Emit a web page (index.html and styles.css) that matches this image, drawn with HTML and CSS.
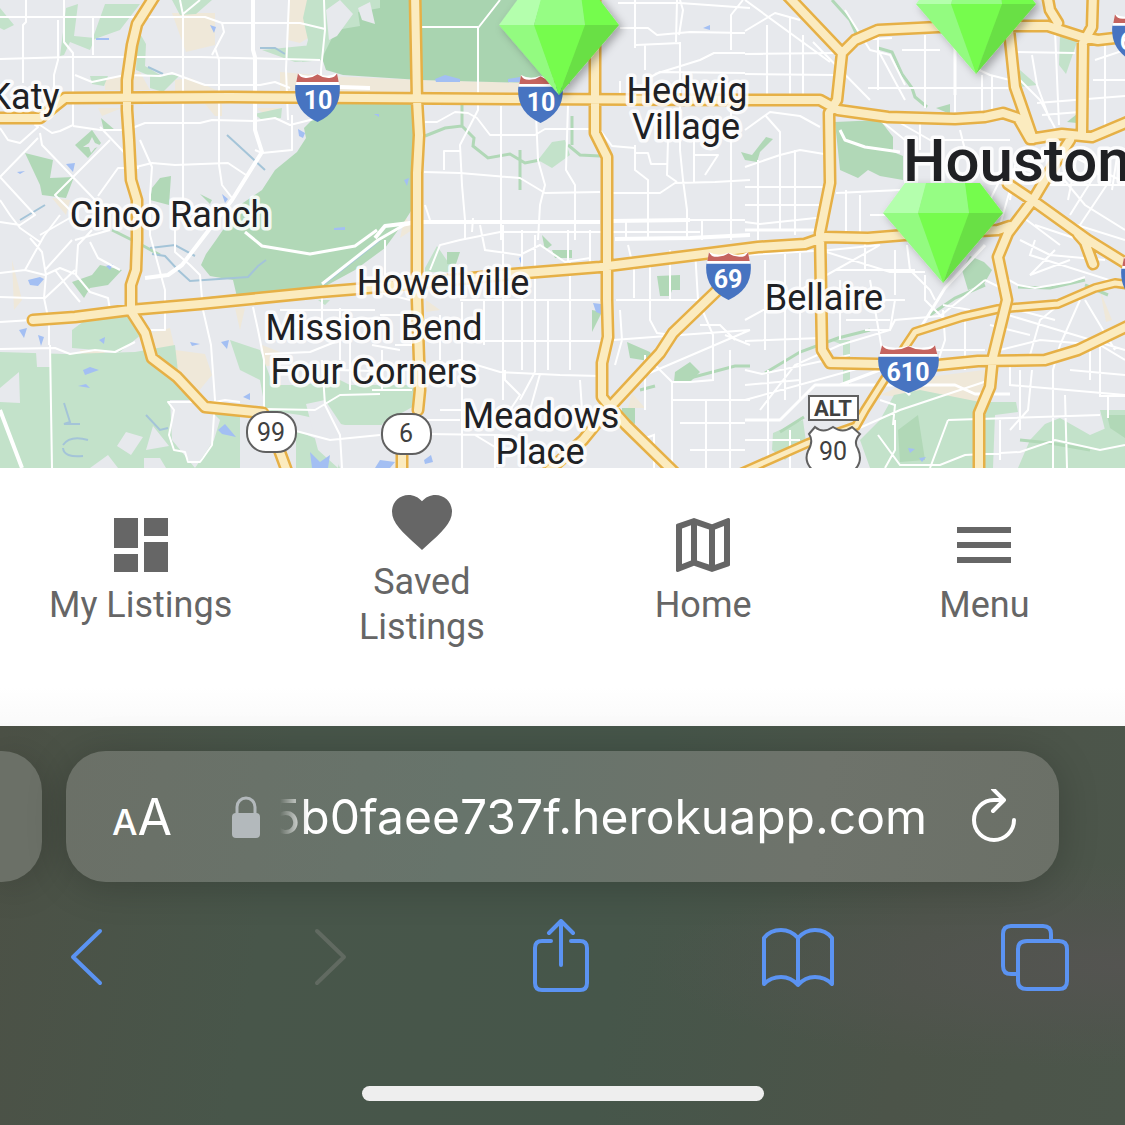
FILE: index.html
```html
<!DOCTYPE html>
<html lang="en">
<head>
<meta charset="utf-8">
<meta name="viewport" content="width=device-width, initial-scale=1">
<title>Listings map</title>
<link rel="stylesheet" href="styles.css">
</head>
<body>
<main class="map">
<svg class="map-canvas" viewBox="0 0 1125 468" role="img" aria-label="Map of Houston">
<defs>
  <symbol id="interstate" viewBox="0 0 136 146" preserveAspectRatio="none">
    <path d="M2 40 9 0Q36 15 68 2Q100 15 127 0L134 40Z" fill="#fff"/>
    <path d="M4 27 9 1Q17 18 40 14Q56 13 68 4Q80 13 96 14Q119 18 127 1L132 27Z" fill="#c5645f"/>
    <path d="M1 36H135Q142 112 68 146Q-6 112 1 36Z" fill="#4774c1"/>
  </symbol>
  <symbol id="gem" viewBox="0 0 120 100">
    <path d="M22 0H44L35 30H0Z" fill="#b4ffad"/>
    <path d="M43 0H83L86 30H35Z" fill="#96fd84"/>
    <path d="M82 0H97L120 30H86Z" fill="#74fc4d"/>
    <path d="M0 30H36L60 100Z" fill="#93fb80"/>
    <path d="M35 30H87L60 100Z" fill="#76fc4e"/>
    <path d="M86 30H120L60 100Z" fill="#69e044"/>
  </symbol>
  <filter id="shade" x="-20%" y="-20%" width="150%" height="150%">
    <feDropShadow dx="4" dy="3" stdDeviation="4" flood-color="#000" flood-opacity=".3"/>
  </filter>
</defs>
<rect width="1125" height="468" fill="#e7e9ed"/>

<!-- built-up and commercial land -->
<g fill="#efe8d9">
  <path d="M172 13H215V45L186 52ZM290 0H310L304 15 308 38 300 43 288 40ZM105 80 140 72 150 90H105ZM175 80 190 78 220 92H175ZM258 108H282L278 112 268 115 258 110ZM98 108H122L102 116ZM205 104H222V116H215ZM280 72 330 76 420 80 560 84V96H280ZM52 198 70 200 66 215Z"/>
  <path d="M150 333 170 328 175 350 205 354 212 375 198 392 172 380ZM80 350 105 350 104 356H82ZM235 308H245L240 330ZM12 260 22 300 14 310ZM262 345 280 352V366H264ZM405 215 412 230 400 238ZM880 395 920 378 1000 368 985 402 930 400ZM1100 290 1112 320 1106 322ZM632 393 645 408 628 408ZM426 300 440 310 426 312Z"/>
</g>

<!-- light parks -->
<g fill="#c3e2ca">
  <path d="M307 0H380V40L322 60 302 62 308 40 303 18ZM66 8 78 4 74 36 95 38 90 50 70 42 64 55 60 56ZM105 4H140L120 30 92 40 95 32ZM172 0H212L196 14 180 15ZM138 30 146 44 145 66 160 75H180L163 92 150 88 150 76 136 70ZM262 50 322 44V60L295 62ZM254 114 282 108 281 118 262 120ZM90 76H108L104 86 92 84ZM0 8 14 25 4 30 0 28Z"/>
  <path d="M0 352 65 354 135 352 175 345 180 390 202 408 240 415 240 468H0ZM72 330 88 318 136 310 142 334 120 352 72 348ZM230 340 260 350 275 390 310 395 318 408H265L260 380 240 370ZM300 385 340 380 360 390 370 420H345L310 412ZM265 385H415L425 400 380 425H345L300 415 265 410ZM296 430 330 445 340 468H296ZM210 296H245L240 305 212 305ZM268 330H300V340H272ZM318 300H330L325 305ZM368 396 383 395 382 425H368Z"/>
  <path d="M894 395 920 390 980 402H1016L1018 412 995 415 993 468H870L860 440 880 420ZM1060 418 1090 435 1125 420V468H1018L1030 440 1045 424ZM1100 410H1125V430H1105ZM552 142 565 140 570 155 552 168 538 160ZM1060 35 1077 42 1066 74 1059 65ZM1020 70 1037 85 1020 87ZM425 268 437 246 448 262 459 270 455 272H425ZM830 340 850 340 850 384H843V345ZM773 433 803 420 806 442 785 460 772 450Z"/>
</g>

<!-- woodland and reservoirs -->
<g fill="#b1d8b7">
  <path d="M328 104H412L418 200 404 222 385 248 355 270 322 288 237 297 233 280 210 276 201 265 206 254 216 240 240 205 262 190 275 170 297 152 306 138 304 128Z"/>
  <path d="M835 122 880 120 893 137 893 152 903 156V180L880 176 868 170 858 178 840 170ZM741 152 752 155 766 137 773 139 760 152 757 162 745 160ZM962 270 970 256 984 262 992 270 984 284 968 290ZM657 276 680 275 680 290H672L670 296H660ZM627 342 650 352 655 362 630 358ZM675 372 690 362 700 372 690 382 674 382ZM92 130 101 143 88 158 75 145ZM25 153 53 160 50 178 74 177 66 198 42 195 40 185ZM152 188 160 178 171 176 169 205 150 200ZM72 282 92 275 100 265 122 270 108 285 90 288 84 298Z"/>
  <path d="M898 430 918 415 920 428 925 460 900 462ZM1107 415H1125V438L1110 428ZM622 408H635V424L622 420ZM542 235 552 245 545 250ZM552 250H572V258H555ZM447 252H460L456 264H447ZM101 118 115 130 104 131ZM592 310 602 312 592 332ZM200 194 212 200 210 204ZM936 108 950 104V114ZM1067 122 1077 114V123Z"/>
</g>
<path d="M336 30 360 26 358 12 380 8 380 0H570V84L420 80 343 75 326 70 322 58Z" fill="#a9d4b0"/>
<path d="M326 10 340 0 353 14 337 36 329 40ZM358 8 370 2 375 24 362 20Z" fill="#e7e9ed"/>
<g fill="#e7e9ed">
  <path d="M92 137 95 143 102 146 95 148 91 153 89 147 83 147 89 143ZM0 388 19 372 20 403 0 402ZM36 352H50V367H37ZM117 446 126 432 143 437 131 455ZM146 450 153 426 169 446ZM90 468 108 455 118 468ZM144 458H160L166 468H144ZM170 400H200L220 420 214 440 195 468 172 440ZM306 404 325 400 345 430 338 468 318 450ZM200 285 220 280 230 292 205 298Z"/>
</g>

<!-- streams and ponds -->
<g fill="none" stroke="#b1d8b7" stroke-width="3">
  <path d="M425 136 445 128 462 126 462 105M462 126 474 138 473 146 488 158 510 154 525 163 540 160M568 145 580 155 600 156M520 150V190M572 116V145"/>
  <path d="M832 0 850 20 857 35M878 48 892 52 902 74 912 88 915 97 927 107M870 330 838 338 800 352 765 373M930 315 955 298 985 285M1018 287 1050 288 1085 280M112 230 140 244 160 255M1085 285 1108 295"/>
  <path d="M690 378 735 366 750 366M1020 440 1050 443 1090 450M780 432 804 417M640 390 655 386"/>
</g>
<g fill="none" stroke="#a4c4d8" stroke-width="2">
  <path d="M152 254 165 256 178 270 190 281 248 277 258 266 266 260M150 248 175 245 195 256M324 284 380 240M227 135 265 170M260 48 275 48 285 54M148 67 163 74M64 403 70 422 64 424H80M63 445Q70 435 88 440M63 448Q64 458 83 456M20 220 45 205M146 415 160 430 168 428"/>
</g>
<g fill="#a3bff3">
  <path d="M28 280 40 277 44 279 38 286 30 285ZM19 330 27 328 24 338ZM38 335 44 337 41 346ZM83 370 90 367 99 370 85 375ZM78 386 86 384 90 388ZM66 164 75 163 73 172ZM17 172 25 171 20 174ZM298 129 305 133 303 138 299 136ZM210 25 216 27 214 33ZM222 194 228 199 225 203ZM96 38H109V40H96ZM435 79 445 75 460 79V82H436ZM508 79 520 77V82H508ZM190 342 200 344 192 346ZM221 342 229 340 227 349ZM218 430 225 424 236 437 222 434ZM243 397 250 393V400ZM106 266 113 264 110 270ZM99 340 105 337 104 344ZM334 228 345 227V230H334ZM593 303 601 304V314L596 312ZM519 258 523 256 522 267ZM374 114H379V117ZM404 180 409 178 407 186ZM310 452 320 462 330 455 328 468H312ZM375 468 380 460 395 462 390 468ZM424 460 431 455 433 462 425 464ZM908 448 915 449 910 453ZM919 458 926 457 922 462ZM703 28 710 25V30Z"/>
</g>

<!-- local streets -->
<g fill="none" stroke="#fff" stroke-width="2" stroke-linejoin="round">
  <path d="M0 17H205L222 23H300L325 29M0 59 70 57H200L320 60M26 0V22L23 25V83M64 0V42L73 53V125L60 131 52 133 40 125H35L38 127 20 143 8 140 0 128M58 20V60L54 75V92M93 18V55M180 0 183 15V200M183 14 200 0M222 23 224 32 212 55M215 48 219 60V165L222 185 232 198M289 0 286 70 288 120M324 0 325 30 321 70V78M75 75 92 82 125 75 160 76 172 73 205 85 260 85 275 82 290 88"/>
  <path d="M127 130 145 123H200L212 120 255 121 275 118 290 125 318 118M255 150 262 153 292 150V115M132 168 152 163 175 165 228 163 246 175M40 133 42 145 95 200M100 127 120 148 138 168 118 168 98 196M125 130H100L73 126M38 138 0 177 35 215 20 225 0 222M110 140 55 195 75 215 40 235M0 200 10 215 20 228 40 242M140 140 152 167 150 195 150 235 165 290V330H145"/>
  <path d="M0 273 25 270 45 275 60 268 75 274M60 215 44 236 25 270M30 238 42 252 46 275 44 298 49 322V345M72 240 45 270M92 230 78 245 76 275 90 292 108 298 110 310M75 240 110 230M90 242 98 258 120 270M55 270 70 290 80 302M0 297 30 298H45L75 270M0 322 32 320M0 349 55 348 70 354 95 350 115 352 135 342M50 345 52 468M175 230V252L190 265 200 275 203 310 211 345 215 400 212 445 203 458 200 462H188L185 452 174 450 169 435 174 410 168 402H215L225 400 240 402"/>
  <path d="M253 307 258 330 264 360V410M265 354 310 352 335 342M265 409 315 410 340 395 380 394M322 360 325 405 340 435 342 468M296 431 330 440 380 435M322 288V340M280 310H375M285 330 330 320 380 318M350 330V390M335 370 375 371M340 308V360"/>
  <path d="M420 27H478M478 94V28L500 0M478 94V110L460 145 462 185 465 220V240M425 122H437L455 112 468 113 477 118 490 135H535L545 129H600M501 106V240M536 115 538 160 545 185 540 205 538 240M568 105 566 170 575 185V240M424 172 460 173 520 178 545 193 600 192M444 170V151H460M472 232 473 218M425 205 430 220"/>
  <path d="M618 3 680 3 750 8M635 0V48M620 28H648L657 35 690 32 745 33M677 0 676 42M680 0 683 10 679 35M731 50V15L743 0M636 45 680 43M645 45V70M620 81V95M655 74 700 60 714 53H745M600 130 612 146 635 148M680 42V150L683 180 687 210V240M635 145V170L648 180V240M635 148V153H648L651 164H668M668 140 667 175 677 182M610 193H660L675 183 715 182 750 180M694 140V182M695 155H718L705 175M731 110V240M626 240V220M702 220V240M610 220H745M645 80 660 72 745 73"/>
  <path d="M745 31 775 13 800 20M745 0 830 62M745 54 838 53M745 74 835 75M767 25V94M790 18V94M803 35V98M813 42 870 100M878 30V90M925 35V108M955 86V112M902 50 940 50M868 88H1010M975 68 990 75 1010 80M982 75V112M992 75V112M878 50 905 100M845 10 870 50 890 55 905 85M855 40 892 38M1015 52 1075 53M1055 30 1059 125M1020 80 1040 100 1055 128M1032 55 1037 85 1050 120M1037 103 1125 96M1095 60 1125 50M1093 80H1125M1105 45V125M1042 115 1080 112M745 130 770 112 800 116 820 127M765 115 780 132V230M745 167 780 155 800 150 830 155M745 187H830M745 205H825M795 150V235M758 160V240M745 222 760 224 825 217M836 193 900 190M860 195V235M870 215H895M846 190V233M895 120 930 140H1010M920 120V150M960 130 965 150M880 120 905 140"/>
</g>
<g fill="none" stroke="#fff" stroke-width="2">
  <path d="M430 270 440 245 460 240 500 232H700M480 225 485 250 520 255 540 245 565 262 590 258M503 225V400M522 230V300M460 300H600M462 302V468M460 341H600L680 335 750 330M484 345V300M425 320 470 325M425 370 460 360 500 372 560 375 600 376M505 370V380L520 395 510 410M535 372 520 400M540 374 530 410M522 300V370M548 300V370M570 262V370M580 380 582 410M568 230V262M590 230V262M535 235V372M628 245 634 270V298M650 258V320L657 333 672 335M670 250V300M695 250 698 300 713 335V380L690 382 672 382 655 365 645 358M616 300H702M620 310 622 340 615 365M645 355V410M645 375 750 330M725 335 750 345M672 382V468M672 400H750M680 423H745M706 400V468M730 350V468M640 440 654 435V468M690 450H745M700 325 720 325 735 340M370 290 410 300M385 240V275M440 410H465M425 420H460M425 434 500 435 520 440M475 435 500 450 560 460M495 435V468M380 315H412M395 345H412V330M372 345 400 350M382 350V390M372 390H412M440 315V360"/>
  <path d="M745 255 830 250 880 245M765 260V350M785 245V400M800 245V400M745 341 820 338M745 385 800 380M745 400 835 375 860 368M820 250 890 272H925M870 280 882 350M840 280V340M895 300 890 330 865 330M760 410 795 365 840 345 890 330 895 320 940 316 985 280M745 370 762 374 790 368 850 355M745 320 800 290 880 245M835 270H915M865 240V270M895 250V295M907 245 910 270 930 290 935 300M925 275 925 300 950 325M846 300H905M846 320H890M943 310 945 340 935 370M965 320V370M935 350H985M943 305 970 310M1000 275 1018 285 1035 288 1070 282 1085 277M985 280 1005 290M1008 315 1125 350M1018 310 1055 320M1020 240 1050 255 1105 260M1035 240 1030 255 1125 285M1055 250 1030 275 1070 260M1080 300 1060 345 1053 370V468M1065 300 1040 320 1030 355M1085 300 1115 350M1000 350 1040 340 1100 345 1125 360M1020 370V430M1010 360 1010 385 1125 395M1065 395 1067 468M1100 340V396H1125M1090 345V380M1108 395V418M948 420 1100 415M895 420V450L885 468M878 435 900 465H940L965 455 1020 452 1055 440 1100 450 1125 445M948 420 930 468M855 430 900 410 990 380M880 400 895 405 893 425M745 440H800M790 430V468M768 370V460M1000 460V420M905 340 903 380M1032 370 1028 410 1010 430M990 325 1030 335M1070 370 1125 375"/>
  <path d="M1000 180 985 210M1010 190 1000 225M1015 165 1010 200M1060 175 1085 205 1125 230M1075 165 1068 200M1095 175 1070 215M1110 180 1080 225M1050 185 1125 185M1045 215 1125 240M1035 225 1110 250M1020 215 1060 245M1060 150 1120 180M1100 155 1098 175M1118 150 1112 190"/>
</g>
<g fill="none" stroke="#fff" stroke-width="4" stroke-linejoin="round">
  <path d="M253 0V50L255 57V130L262 152 232 200 205 235 182 265 168 275 145 278M370 88 340 87M0 410 22 468M375 238 385 226 418 222H600M610 221 690 220M615 239 690 238 750 235"/>
  <path d="M245 232 262 246 310 254 355 246 377 230M322 284 378 240 404 225 418 222M840 130 845 140 865 147 900 152M745 420H780L815 385H900L910 395M900 385H955L975 394H1010M910 345 945 288 985 245M885 368 840 385M944 238 975 225M955 30V95M745 230H820" stroke-width="3"/>
</g>

<!-- freeways: casing, then fill -->
<g fill="none" stroke-linejoin="round" stroke-linecap="round">
  <g stroke="#e6b046" stroke-width="10">
    <path id="alt90" d="M738 474 808 443 856 426 865 410 905 347 915 332 962 317 998 309 1058 304 1095 288 1115 283 1130 285"/>
  </g>
  <use href="#alt90" stroke="#fbebbf" stroke-width="5"/>
  <g stroke="#e6b046" stroke-width="13">
    <path id="freeways" d="M156-6 137 24 132 45 127 80V110L129 140 131 180 137 200V240L136 270 131 285V311L145 333 152 358 177 377 205 407 263 413M274 436 288 474M-6 118H40L65 98 230 97 520 99 745 100H820L838 110 888 117 955 119 985 117 1003 113 1018 118 1030 139 1062 134 1092 137 1130 121M786-6 842 53 837 100 829 113 830 183 820 233 822 350 830 363 878 364 938 365 978 361 1045 360 1078 350 1130 325M842 53 855 40 878 30 938 27 1018 26 1048 26 1082 37 1098 40 1115 38M1093-6 1092 27 1083 43 1082 133M1047-6 1050 10 1058 23M1009 30 1015 87 1023 110 1033 139M1070 140 1055 163 1033 200 1008 233 998 257 1007 300 993 357 990 387 979 413V474M1008 184 1035 202 1088 240 1130 266M1078 234 1085 242 1093 264M33 320 75 317 130 310 200 304 320 292 357 289 513 274 600 267 703 254 758 247 805 244 825 237 868 238 905 235 998 230 1010 226M415-6 417 100 419 135 417 173V300L420 390 418 410M402 450V474M595-6V133L607 157V300L608 337 602 363V397L610 407 626 425 676 474M728 280 673 333 660 353 610 407 583 440 545 474"/>
  </g>
  <use href="#freeways" stroke="#fbebbf" stroke-width="8"/>
</g>

<!-- route shields -->
<use href="#interstate" x="295" y="73" width="45" height="49"/>
<use href="#interstate" x="518" y="75" width="45" height="48"/>
<use href="#interstate" x="706" y="252" width="45" height="48"/>
<use href="#interstate" x="878" y="345" width="61" height="48"/>
<use href="#interstate" x="1112" y="14" width="45" height="48"/>
<use href="#interstate" x="1121" y="257" width="45" height="48"/>
<g class="shield-text shield-light">
  <text x="318" y="109">10</text><text x="541" y="111">10</text>
  <text x="728" y="288">69</text><text x="908" y="381">610</text><text x="1134" y="50">69</text>
</g>
<g fill="#fff" stroke="#606060" stroke-width="2">
  <rect x="247" y="412" width="49" height="40" rx="19"/>
  <rect x="382" y="414" width="49" height="40" rx="19"/>
  <path d="M809 396H858V420H809Z"/>
  <path d="M809 434 815 427Q823 434 833 427Q843 434 852 427L860 434Q853 442 858 449Q864 463 852 472H815Q803 463 808 451Q814 441 809 434Z"/>
</g>
<g class="shield-text">
  <text x="271" y="441">99</text><text x="406" y="442">6</text><text x="833" y="460">90</text>
  <text class="shield-alt" x="833" y="416">ALT</text>
</g>

<!-- place names -->
<g class="place">
  <text x="24" y="109">Katy</text><text x="170" y="227">Cinco Ranch</text>
  <text x="687" y="103">Hedwig</text><text x="686" y="139">Village</text>
  <text x="443" y="295">Howellville</text><text x="374" y="340">Mission Bend</text>
  <text x="374" y="384">Four Corners</text><text x="541" y="428">Meadows</text>
  <text x="540" y="464">Place</text><text x="824" y="310">Bellaire</text>
</g>
<text class="city" x="903" y="181">Houston</text>

<!-- listing pins -->
<g filter="url(#shade)">
  <use href="#gem" x="499" y="-5" width="120" height="100"/>
  <use href="#gem" x="916" y="-26" width="120" height="100"/>
  <use href="#gem" x="883" y="183" width="120" height="100"/>
</g>
</svg>
</main>

<nav class="tabs" aria-label="Main">
  <a class="tab" href="#listings"><svg class="tab-icon" viewBox="0 0 24 24" aria-hidden="true"><path d="M3 13h8V3H3v10zm0 8h8v-6H3v6zm10 0h8V11h-8v10zm0-18v6h8V3h-8z"/></svg><span>My Listings</span></a>
  <a class="tab" href="#saved"><svg class="tab-icon" viewBox="0 0 24 24" aria-hidden="true"><path d="m12 21.350-1.450-1.320C5.400 15.360 2 12.280 2 8.500 2 5.420 4.420 3 7.500 3c1.740 0 3.410.81 4.500 2.090C13.090 3.810 14.760 3 16.500 3 19.580 3 22 5.420 22 8.500c0 3.780-3.400 6.860-8.550 11.540L12 21.350z"/></svg><span>Saved Listings</span></a>
  <a class="tab" href="#home"><svg class="tab-icon" viewBox="0 0 24 24" aria-hidden="true"><path d="m20.500 3-.16.03L15 5.100 9 3 3.360 4.900c-.21.07-.36.25-.36.48V20.500c0 .28.22.5.5.5l.16-.03L9 18.900l6 2.100 5.640-1.900c.21-.07.36-.25.36-.48V3.500c0-.28-.22-.5-.5-.5zM10 5.470l4 1.400v11.660l-4-1.400V5.470zm-5 .99 3-1.010v11.700l-3 1.160V6.460zm14 11.080-3 1.010V6.860l3-1.160v11.840z"/></svg><span>Home</span></a>
  <a class="tab" href="#menu"><svg class="tab-icon" viewBox="0 0 24 24" aria-hidden="true"><path d="M3 18h18v-2H3v2zm0-5h18v-2H3v2zm0-7v2h18V6H3z"/></svg><span>Menu</span></a>
</nav>

<footer class="browser">
  <div class="address-row">
    <div class="next-tab"></div>
    <div class="address">
      <button class="text-size" type="button" aria-label="Page settings"><span class="small-a">A</span>A</button>
      <button class="url" type="button">
        <svg class="lock" viewBox="0 0 28 42" aria-hidden="true"><rect y="17" width="28" height="25" rx="4" fill="#b3b9bc"/><path d="M5 19V11a9 9 0 0 1 18 0v8" fill="none" stroke="#b3b9bc" stroke-width="3"/></svg>
        <span class="host">5b0faee737f.herokuapp.com</span>
      </button>
      <button class="reload" type="button" aria-label="Reload"><svg viewBox="0 0 46 56" width="46" height="56" aria-hidden="true"><path d="M43 31A20 20 0 1 1 23 11h10M22 0l11 11-11 11" fill="none" stroke="#fff" stroke-width="4" stroke-linecap="round" stroke-linejoin="round"/></svg></button>
    </div>
  </div>
  <div class="toolbar">
    <button type="button" aria-label="Back"><svg viewBox="0 0 34 74" width="34" height="74"><path d="M31 12 4 38 31 64"/></svg></button>
    <button class="forward" type="button" aria-label="Forward" disabled><svg viewBox="0 0 34 74" width="34" height="74"><path d="M3 12 30 38 3 64"/></svg></button>
    <button type="button" aria-label="Share"><svg viewBox="0 0 58 74" width="58" height="74"><path d="M19 22H10Q3 22 3 29V64Q3 71 10 71H48Q55 71 55 64V29Q55 22 48 22H39M29 46V3M17 14 29 2 41 14"/></svg></button>
    <button type="button" aria-label="Bookmarks"><svg viewBox="0 0 72 74" width="72" height="74"><path d="M36 66V19Q29 11 19 11Q8 11 2 19V65Q9 58 19 58Q29 58 36 66Q43 58 53 58Q63 58 70 65V19Q64 11 53 11Q43 11 36 19"/></svg></button>
    <button type="button" aria-label="Tabs"><svg viewBox="0 0 68 74" width="68" height="74"><path d="M17 55H10Q2 55 2 47V15Q2 7 10 7H42Q50 7 50 15V22M26 22H58Q66 22 66 30V62Q66 70 58 70H26Q17 70 17 62V30Q17 22 26 22Z"/></svg></button>
  </div>
  <div class="home-indicator"></div>
</footer>
</body>
</html>
```
FILE: styles.css
```css
* { box-sizing: border-box; }

body {
  margin: 0;
  min-height: 100vh;
  display: flex;
  flex-direction: column;
  background: #fff;
  font-family: Roboto, "Liberation Sans", sans-serif;
}

button {
  margin: 0;
  padding: 0;
  border: 0;
  background: none;
  color: inherit;
  font: inherit;
}

.map-canvas {
  display: block;
  width: 100%;
  height: auto;
}

.place text, .city {
  font-size: 36px;
  text-anchor: middle;
  fill: #202124;
  stroke: rgba(255, 255, 255, .85);
  stroke-width: 7px;
  stroke-linejoin: round;
  paint-order: stroke;
}

.city {
  font-size: 60px;
  font-weight: 500;
  text-anchor: start;
}

.shield-text {
  font-size: 25px;
  text-anchor: middle;
  fill: #404040;
}

.shield-light {
  font-weight: 700;
  fill: #fff;
}

.shield-alt {
  font-size: 22px;
  font-weight: 700;
}

.tabs {
  display: grid;
  grid-template-columns: repeat(4, 1fr);
  align-items: center;
  padding: 18px 0 76px;
  background: linear-gradient(#fff 85%, #fafafa);
}

.tab {
  display: flex;
  flex-direction: column;
  align-items: center;
  gap: 2px;
  padding: 0 48px;
  color: #666;
  font-size: 36px;
  line-height: 45px;
  text-align: center;
  text-decoration: none;
}

.tab-icon {
  width: 72px;
  height: 72px;
  fill: currentColor;
}

.browser {
  flex: 1;
  padding: 25px 0 24px;
  background:
    radial-gradient(ellipse at 100% 60%, #545451, transparent 30%),
    linear-gradient(100deg, #4c5146, #48564a 25%, #46564a 55%, #4c5449 80%, #4c564b);
  color: #fff;
}

.address-row {
  display: flex;
  gap: 24px;
  padding-right: 66px;
}

.next-tab {
  width: 42px;
  border-radius: 0 40px 40px 0;
  background: #6b7067;
  box-shadow: 0 4px 40px rgba(0, 0, 0, .2);
}

.address {
  flex: 1;
  min-width: 0;
  height: 131px;
  display: flex;
  align-items: center;
  padding: 0 42px 0 46px;
  border-radius: 40px;
  background: linear-gradient(100deg, #6b7067, #67746b 40%, #6e736b 75%, #6b7067);
  box-shadow: 0 4px 40px rgba(0, 0, 0, .2);
  font-family: Inter, "Liberation Sans", sans-serif;
  font-size: 48px;
}

.text-size {
  font-size: 50px;
  text-align: left;
}

.small-a {
  font-size: 36px;
  font-weight: 500;
}

.url {
  flex: 1;
  min-width: 0;
  display: flex;
  align-items: center;
  gap: 20px;
  margin: 0 44px 0 60px;
}

.lock {
  flex: none;
  width: 28px;
  height: 42px;
}

.host {
  flex: 1;
  min-width: 0;
  display: flex;
  justify-content: flex-end;
  overflow: hidden;
  white-space: nowrap;
  mask-image: linear-gradient(to right, transparent, #000 28px);
}

.reload, .reload svg {
  display: block;
  height: 56px;
}

.toolbar {
  display: flex;
  justify-content: space-between;
  padding: 37px 54px 0 50px;
}

.toolbar button {
  display: flex;
  justify-content: center;
  width: 72px;
}

.toolbar .forward { padding-left: 16px; }

.toolbar svg {
  display: block;
  fill: none;
  stroke: #5b93f2;
  stroke-width: 4px;
  stroke-linecap: round;
  stroke-linejoin: round;
}

.toolbar button:disabled svg { stroke: #616a61; }

.home-indicator {
  width: 402px;
  height: 15px;
  margin: 93px auto 0;
  border-radius: 8px;
  background: #eee;
}
```
